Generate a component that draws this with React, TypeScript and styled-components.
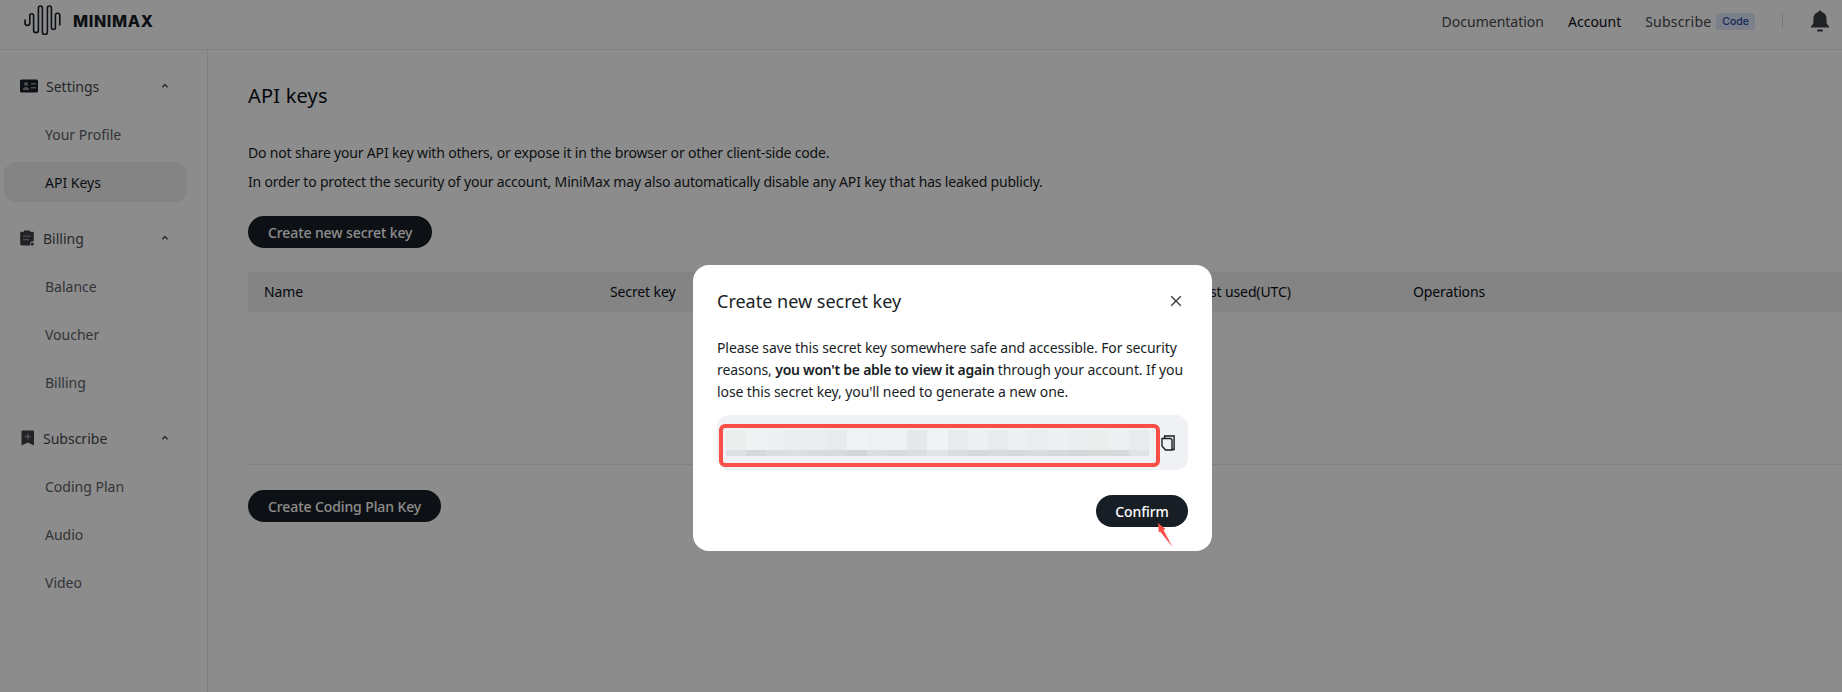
import React from "react";
import styled, { createGlobalStyle } from "styled-components";

const Global = createGlobalStyle`
  html, body { margin: 0; padding: 0; height: 100%; background: #fff; overflow: hidden; }
  body { font-family: "Noto Sans", "Open Sans", Arial, sans-serif; color: #181e25; }
`;

const Page = styled.div`
  width: 1842px;
  height: 692px;
  display: flex;
  flex-direction: column;
  overflow: hidden;
`;
const Header = styled.header`
  height: 50px;
  flex: none;
  box-sizing: border-box;
  border-bottom: 1px solid #e8e9ec;
  display: flex;
  align-items: flex-start;
  justify-content: space-between;
  padding: 5px 12px 0 24px;
`;
const Brand = styled.div`
  display: flex;
  align-items: center;
  gap: 11px;
  height: 32px;
`;
const LogoMark = styled.svg`
  margin-bottom: 2px;
`;
const BrandName = styled.span`
  font-family: "Inter", sans-serif;
  font-weight: 800;
  font-size: 16px;
  letter-spacing: 0.65px;
  color: #181e25;
`;
const Nav = styled.nav`
  display: flex;
  align-items: center;
  gap: 24px;
  height: 32px;
  font-size: 14px;
`;
const NavLink = styled.span<{ $active?: boolean }>`
  color: ${(p) => (p.$active ? "#0a0e14" : "#45494f")};
  white-space: nowrap;
`;
const SubscribeLink = styled.div`
  display: flex;
  align-items: center;
  gap: 5px;
  letter-spacing: 0.2px;
`;
const CodeTag = styled.span`
  font-family: "Inter", sans-serif;
  font-size: 10.5px;
  font-weight: 500;
  letter-spacing: 0;
  color: #2b4aa0;
  background: #dfe8fb;
  padding: 0 6px;
  height: 17px;
  line-height: 17px;
  border-radius: 4px;
`;
const NavDivider = styled.div`
  width: 1px;
  height: 16px;
  background: #dcdde0;
  margin-left: 3px;
`;
const BellWrap = styled.span`
  display: flex;
  margin-left: 3px;
`;
const Body = styled.div`
  flex: 1;
  display: flex;
  min-height: 0;
`;
const Sidebar = styled.aside`
  width: 208px;
  flex: none;
  box-sizing: border-box;
  border-right: 1px solid #e8e9ec;
  padding: 16px 20px 0 4px;
  display: flex;
  flex-direction: column;
  gap: 16px;
`;
const Group = styled.div`
  display: flex;
  flex-direction: column;
  gap: 8px;
`;
const GroupHead = styled.div`
  height: 40px;
  display: flex;
  align-items: center;
  padding-left: 16px;
  padding-right: 17px;
  color: #45494f;
  font-size: 14px;
`;
const GroupIcon = styled.span<{ $gap: number }>`
  width: 18px;
  height: 18px;
  display: flex;
  align-items: center;
  justify-content: flex-start;
  margin-right: ${(p) => p.$gap}px;
`;
const GroupTitle = styled.span`
  flex: 1;
`;
const Item = styled.div<{ $active?: boolean }>`
  height: 40px;
  display: flex;
  align-items: center;
  padding-left: 41px;
  font-size: 14px;
  border-radius: 12px;
  color: ${(p) => (p.$active ? "#181e25" : "#5d6167")};
  background: ${(p) => (p.$active ? "#f0f0f2" : "transparent")};
`;
const Main = styled.main`
  flex: 1;
  min-width: 0;
  padding: 31px 0 0 40px;
`;
const Title = styled.h1`
  margin: 0;
  font-size: 20px;
  font-weight: 400;
  line-height: 30px;
  letter-spacing: 0.2px;
  color: #0a0e14;
`;
const Para = styled.p`
  margin: 0;
  font-size: 14px;
  line-height: 29px;
  letter-spacing: -0.18px;
  color: #181e25;
  white-space: nowrap;
`;
const Notes = styled.div`
  margin-top: 27px;
`;
const PrimaryButton = styled.button`
  height: 32px;
  border: none;
  border-radius: 16px;
  padding: 0 20px;
  background: #181e25;
  color: #fff;
  font: 500 14px "Noto Sans", sans-serif;
  letter-spacing: -0.1px;
  white-space: nowrap;
`;
const ButtonRow = styled.div`
  margin-top: 20px;
`;
const TableHead = styled.div`
  margin-top: 24px;
  height: 40px;
  box-sizing: border-box;
  padding: 0 0 2px 16px;
  background: #f0f0f2;
  display: grid;
  grid-template-columns: 346px 585px 218px 1fr;
  align-items: center;
  font-size: 14px;
  letter-spacing: -0.12px;
  color: #0a0e14;
`;
const TableBody = styled.div`
  height: 152px;
  border-bottom: 1px solid #e8e9ec;
`;
const SecondRow = styled.div`
  margin-top: 25px;
`;
const Overlay = styled.div`
  position: fixed;
  inset: 0;
  background: rgba(0, 0, 0, 0.45);
`;
const Dialog = styled.div`
  position: fixed;
  left: 693px;
  top: 265px;
  width: 519px;
  height: 286px;
  box-sizing: border-box;
  background: #fff;
  border-radius: 16px;
  padding: 20px 24px 24px;
  display: flex;
  flex-direction: column;
`;
const DialogHead = styled.div`
  display: flex;
  align-items: center;
  justify-content: space-between;
  height: 32px;
`;
const DialogTitle = styled.h2`
  margin: 0;
  font-size: 18px;
  font-weight: 400;
  color: #181e25;
`;
const CloseBtn = styled.span`
  display: flex;
  margin-right: 6px;
`;
const DialogText = styled.p`
  margin: 20px 0 0;
  font-size: 14px;
  line-height: 22px;
  letter-spacing: -0.1px;
  color: #181e25;
  b { font-weight: 600; letter-spacing: -0.27px; }
`;
const KeyBox = styled.div`
  margin-top: 12px;
  height: 55px;
  flex: none;
  background: #f0f1f4;
  border-radius: 12px;
  position: relative;
  box-sizing: border-box;
  padding: 15px 13px 0 9px;
  display: flex;
  justify-content: space-between;
`;
const Blur = styled.div`
  width: 423px;
  display: flex;
  flex-direction: column;
`;
const BlurRow = styled.div<{ $h: number }>`
  display: flex;
  height: ${(p) => p.$h}px;
`;
const BlurCell = styled.span<{ $c: string }>`
  flex: 1;
  background: ${(p) => p.$c};
`;
const RedBox = styled.div`
  position: absolute;
  left: 2px;
  top: 9px;
  width: 441px;
  height: 43px;
  box-sizing: border-box;
  border: 4px solid #f94d47;
  border-radius: 6px;
`;
const CopyWrap = styled.span`
  display: flex;
  height: 16px;
  margin-top: 5px;
`;
const DialogFooter = styled.div`
  margin-top: 25px;
  display: flex;
  justify-content: flex-end;
  position: relative;
`;
const ConfirmButton = styled.button`
  height: 32px;
  width: 92px;
  border: none;
  border-radius: 16px;
  background: #181e25;
  color: #fff;
  font: 500 14px "Noto Sans", sans-serif;
  letter-spacing: -0.1px;
`;
const ArrowMark = styled.svg`
  position: absolute;
  left: 439px;
  top: 25px;
`;

const Chevron = () => (
  <svg width="10" height="10" viewBox="0 0 10 10" fill="none">
    <path d="M2.4 6.2 5 3.6l2.6 2.6" stroke="#45494f" strokeWidth="1.4" />
  </svg>
);

const topCells = ["#eceded", "#f0f1f3", "#eeeff1", "#ecedef", "#ecedef", "#e9eaec", "#f1f2f4", "#eff0f2", "#f0f1f3", "#e7e8ea", "#f1f2f4", "#e9eaec", "#eeeff1", "#e9eaec", "#eeeff1", "#ebecee", "#eeeff1", "#ecedef", "#eceded", "#eeeff1", "#e9eaec"];
const lowCells = ["#dedfe2", "#d7d8da", "#dcdde0", "#dedfe2", "#d9dadc", "#d9dadc", "#d3d4d6", "#dcdde0", "#d8d9db", "#dcdde0", "#e2e3e5", "#dcdde0", "#d8d9db", "#d9dadc", "#d8d9db", "#dadbdd", "#d8d9db", "#d6d7d9", "#d8d9db", "#d8d9db", "#e2e3e5"];

export default function App() {
  return (
    <>
      <Global />
      <Page>
        <Header>
          <Brand>
            <LogoMark width="38" height="30" viewBox="24 5 38 30" fill="none" stroke="#181e25" strokeWidth="1.6" strokeLinecap="round">
              <path d="M25 20v3a2.4 2.4 0 0 0 4.8 0v-7.4a1.9 1.9 0 0 1 3.8 0v14.6a2.4 2.4 0 0 0 4.8 0V8a2 2 0 0 1 4 0v24a2.5 2.5 0 0 0 5 0V8a2 2 0 0 1 4 0v19.5a2 2 0 0 0 4 0v-12a2.2 2.2 0 0 1 4.4 0V25" />
            </LogoMark>
            <BrandName>MINIMAX</BrandName>
          </Brand>
          <Nav>
            <NavLink>Documentation</NavLink>
            <NavLink $active>Account</NavLink>
            <SubscribeLink>
              <NavLink>Subscribe</NavLink>
              <CodeTag>Code</CodeTag>
            </SubscribeLink>
            <NavDivider />
            <BellWrap>
              <svg width="20" height="22" viewBox="0 0 20 22" fill="#3b3f44">
                <path d="M10 0.5a1.6 1.6 0 0 1 1.6 1.5C15 2.8 16.6 5.6 16.6 9v4.4l2.4 3v1H1v-1l2.4-3V9C3.4 5.6 5 2.8 8.4 2A1.6 1.6 0 0 1 10 .5z" />
                <rect x="7" y="19.5" width="6" height="2" rx="1" />
              </svg>
            </BellWrap>
          </Nav>
        </Header>
        <Body>
          <Sidebar>
            <Group>
              <GroupHead>
                <GroupIcon $gap={8}>
                  <svg width="18" height="14" viewBox="0 0 18 14">
                    <rect width="18" height="13" y=".5" rx="1.5" fill="#181e25" />
                    <circle cx="6" cy="5" r="2" fill="#8c8c8c" />
                    <path d="M2.6 11c.3-2 1.6-3 3.4-3s3.100 1 3.400 3z" fill="#8c8c8c" />
                    <rect x="11" y="4" width="5" height="1.500" fill="#8c8c8c" />
                    <rect x="11" y="8" width="5" height="1.500" fill="#8c8c8c" />
                  </svg>
                </GroupIcon>
                <GroupTitle>Settings</GroupTitle>
                <Chevron />
              </GroupHead>
              <Item>Your Profile</Item>
              <Item $active>API Keys</Item>
            </Group>
            <Group>
              <GroupHead>
                <GroupIcon $gap={5}>
                  <svg width="14" height="16" viewBox="0 0 14 16">
                    <path d="M1.500 1.800H4V.500h6v1.300h2.500A1.300 1.300 0 0 1 13.800 3.100v8.400a2.800 2.800 0 0 0-3.400 3.900H1.500A1.300 1.300 0 0 1 .2 14.100V3.100A1.300 1.300 0 0 1 1.500 1.800z" fill="#3b3f44" />
                    <rect x="3" y="5.500" width="8" height="1.300" fill="#8c8c8c" />
                    <rect x="3" y="9" width="6" height="1.300" fill="#8c8c8c" />
                    <circle cx="12.300" cy="14" r="1.600" fill="#3b3f44" />
                  </svg>
                </GroupIcon>
                <GroupTitle>Billing</GroupTitle>
                <Chevron />
              </GroupHead>
              <Item>Balance</Item>
              <Item>Voucher</Item>
              <Item>Billing</Item>
            </Group>
            <Group>
              <GroupHead>
                <GroupIcon $gap={5}>
                  <svg width="15" height="16" viewBox="0 0 15 16">
                    <path d="M2.500.500h10.500A1 1 0 0 1 14 1.500V15.500l-6.200-3-6.300 3V1.500A1 1 0 0 1 2.500.500z" fill="#3b3f44" />
                    <path d="M7 3.500h1.500v2.300h2.300v1.400H8.500v2.300H7V7.200H4.700V5.800H7z" fill="#8c8c8c" />
                  </svg>
                </GroupIcon>
                <GroupTitle>Subscribe</GroupTitle>
                <Chevron />
              </GroupHead>
              <Item>Coding Plan</Item>
              <Item>Audio</Item>
              <Item>Video</Item>
            </Group>
          </Sidebar>
          <Main>
            <Title>API keys</Title>
            <Notes>
              <Para>Do not share your API key with others, or expose it in the browser or other client-side code.</Para>
              <Para>In order to protect the security of your account, MiniMax may also automatically disable any API key that has leaked publicly.</Para>
            </Notes>
            <ButtonRow>
              <PrimaryButton>Create new secret key</PrimaryButton>
            </ButtonRow>
            <TableHead>
              <span>Name</span>
              <span>Secret key</span>
              <span>Last used(UTC)</span>
              <span>Operations</span>
            </TableHead>
            <TableBody />
            <SecondRow>
              <PrimaryButton>Create Coding Plan Key</PrimaryButton>
            </SecondRow>
          </Main>
        </Body>
      </Page>
      <Overlay />
      <Dialog>
        <DialogHead>
          <DialogTitle>Create new secret key</DialogTitle>
          <CloseBtn>
            <svg width="12" height="12" viewBox="0 0 12 12" fill="none" stroke="#3b3f44" strokeWidth="1.400">
              <path d="M1.200 1.200l9.600 9.600M10.800 1.200l-9.600 9.600" />
            </svg>
          </CloseBtn>
        </DialogHead>
        <DialogText>
          Please save this secret key somewhere safe and accessible. For security reasons,{" "}
          <b>you won't be able to view it again</b> through your account. If you lose this secret key, you'll need to generate a new one.
        </DialogText>
        <KeyBox>
          <Blur>
            <BlurRow $h={20}>
              {topCells.map((c, i) => (
                <BlurCell key={i} $c={c} />
              ))}
            </BlurRow>
            <BlurRow $h={6}>
              {lowCells.map((c, i) => (
                <BlurCell key={i} $c={c} />
              ))}
            </BlurRow>
          </Blur>
          <CopyWrap>
            <svg width="14" height="16" viewBox="0 0 14 16" fill="none" stroke="#181e25" strokeWidth="1.400">
              <path d="M3.600 3V1h9.500v13.500h-2" />
              <path d="M1 3.500h8a2 2 0 0 1 2 2v9.500H4.500L1 11z" />
            </svg>
          </CopyWrap>
          <RedBox />
        </KeyBox>
        <DialogFooter>
          <ConfirmButton>Confirm</ConfirmButton>
          <ArrowMark width="20" height="30" viewBox="0 0 20 30">
            <path d="M2 3l7.500 6-2 1 9 17-12-15H2.800z" fill="#f94d47" />
          </ArrowMark>
        </DialogFooter>
      </Dialog>
    </>
  );
}
